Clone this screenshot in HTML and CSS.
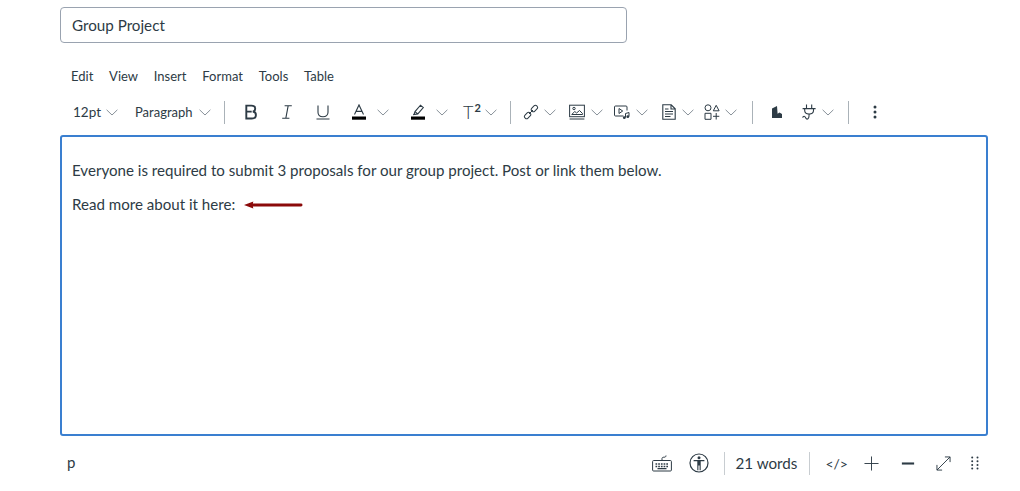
FILE: index.html
```html
<!DOCTYPE html>
<html lang="en">
<head>
<meta charset="utf-8">
<title>Group Project</title>
<link rel="stylesheet" href="styles.css">
</head>
<body>
<svg class="defs" width="0" height="0" aria-hidden="true">
  <symbol id="chev" viewBox="0 0 12 7"><path d="M.6.8 6 6 11.400.8" fill="none" stroke="#7a858d" stroke-width=".9"/></symbol>
</svg>
<main class="page">
  <div class="title-input">Group Project</div>
  <nav class="menubar">
    <span>Edit</span><span>View</span><span>Insert</span><span>Format</span><span>Tools</span><span>Table</span>
  </nav>
  <div class="toolbar">
    <div class="tool w-size"><span class="select-text">12pt</span><svg class="chev"><use href="#chev"/></svg></div>
    <div class="tool w-para"><span class="select-text para">Paragraph</span><svg class="chev"><use href="#chev"/></svg></div>
    <i class="sep s1"></i>
    <div class="tool w-b"><svg class="icon" viewBox="0 0 16 16"><path d="M3.300 1.600h5.200c2.300 0 3.700 1.200 3.700 3.100 0 1.500-.9 2.600-2.400 2.900 1.900.2 3.100 1.500 3.100 3.300 0 2.200-1.600 3.600-4.100 3.600H3.300zM3.300 7.600h5.400" fill="none" stroke="#2d3b45" stroke-width="1.900"/></svg></div>
    <div class="tool w-b"><svg class="icon" viewBox="0 0 16 16"><path d="M5.600 1.700h7.200M3.200 14.300h7.200M9.200 1.700 6.800 14.300" fill="none" stroke="#2d3b45" stroke-width="1.100"/></svg></div>
    <div class="tool w-b"><svg class="icon" viewBox="0 0 16 16"><path d="M3 1.500v6.800c0 3 2 4.500 5 4.500s5-1.500 5-4.500V1.500M1.500 15h13" fill="none" stroke="#2d3b45" stroke-width="1.100"/></svg></div>
    <div class="tool w-a"><svg class="icon" viewBox="0 0 16 16"><path d="M3.500 10.500 8 .9l4.500 9.600M5 7.400h6" fill="none" stroke="#2d3b45" stroke-width="1.100"/><rect x="1" y="12.500" width="14" height="3.200" fill="#000"/></svg><svg class="chev"><use href="#chev"/></svg></div>
    <div class="tool w-hl"><svg class="icon" viewBox="0 0 16 16"><path d="M4 10.500 5 7.600 10.500 1.200l2.800 2.300-5.500 6.400zM4 10.500h-.9M5 7.600l2.800 2.300" fill="none" stroke="#2d3b45" stroke-width="1.100"/><rect x="1" y="12.500" width="14" height="3.200" fill="#000"/></svg><svg class="chev"><use href="#chev"/></svg></div>
    <div class="tool w-sup"><span class="sup-t"><span class="sup-big">T</span><span class="sup-2">2</span></span><svg class="chev chev-tight"><use href="#chev"/></svg></div>
    <i class="sep s2"></i>
    <div class="tool w-link"><svg class="icon" viewBox="0 0 16 16"><g fill="none" stroke="#2d3b45" stroke-width="1"><rect x="9.300" y="1" width="4.200" height="7" rx="2" transform="rotate(45 11.400 4.500)"/><rect x="2.500" y="8" width="4.200" height="7" rx="2" transform="rotate(45 4.600 11.500)"/><path d="m6 10 4-4"/></g></svg><svg class="chev"><use href="#chev"/></svg></div>
    <div class="tool w-img"><svg class="icon" viewBox="0 0 16 16"><g fill="none" stroke="#2d3b45" stroke-width="1"><rect x=".6" y="1.200" width="14.800" height="11.500"/><path d="M2.700 10.500 5.800 7.500 7.600 9 10.500 6.500l3 3v1zM.6 15h14.800"/><circle cx="5" cy="4.500" r="1.200"/></g></svg><svg class="chev"><use href="#chev"/></svg></div>
    <div class="tool w-med"><svg class="icon" viewBox="0 0 16 16"><g fill="none" stroke="#2d3b45" stroke-width="1"><path d="M9.500 12H1.500a1 1 0 0 1-1-1V3a1 1 0 0 1 1-1h10.500a1 1 0 0 1 1 1v3.500"/><path d="m5 4.500 3.700 2.500L5 9.500zM11.500 13.500V9.500l3.500-1v4"/></g><circle cx="10.300" cy="13.700" r="1.400" fill="#2d3b45"/><circle cx="13.800" cy="12.700" r="1.400" fill="#2d3b45"/></svg><svg class="chev"><use href="#chev"/></svg></div>
    <div class="tool w-doc"><svg class="icon" viewBox="0 0 16 16"><g fill="none" stroke="#2d3b45" stroke-width="1.100"><path d="M1.800.8h8.400l4 4v10.400H1.800zM10 .8v4.200h4.200M4 5h3.500M4 7.500h8M4 10h8M4 12.500h5.500"/></g></svg><svg class="chev"><use href="#chev"/></svg></div>
    <div class="tool w-shp"><svg class="icon" viewBox="0 0 16 16"><g fill="none" stroke="#2d3b45" stroke-width="1"><circle cx="4" cy="3.800" r="3"/><path d="m9.300 6.800 2.900-5.500 2.900 5.500zM1 9.300h6v6H1zM12.200 9v6.500M9 12.300h6.300"/></g></svg><svg class="chev"><use href="#chev"/></svg></div>
    <i class="sep s3"></i>
    <div class="tool w-flag"><svg class="flag" viewBox="0 0 10 12"><path d="M0 12V2.400L5 0l.6 7.800 1.900-1.300L10 8v4z" fill="#2d3b45"/></svg></div>
    <div class="tool w-plug"><svg class="icon" viewBox="0 0 16 16"><g fill="none" stroke="#2d3b45" stroke-width="1.100"><path d="M5.500.6v3.800M10.700.6v3.800M1.600 4.600h13M3.700 4.600v2c0 2.300 1.900 3.500 4.400 3.500s4.400-1.200 4.400-3.500v-2M8.100 10.200c0 3.500-.7 4.900-2 4.900-1.600 0-1.400-2.900-3-2.900-.9 0-1.300.7-1.300 1.600"/></g></svg><svg class="chev"><use href="#chev"/></svg></div>
    <i class="sep s4"></i>
    <div class="tool w-more"><svg class="dots" viewBox="0 0 4 14"><circle cx="2" cy="2" r="1.500"/><circle cx="2" cy="7" r="1.500"/><circle cx="2" cy="12" r="1.500"/></svg></div>
  </div>
  <section class="editor">
    <p class="lead">Everyone is required to submit 3 proposals for our group project. Post or link them below.</p>
    <p class="read">Read more about it here:<svg class="arrow" viewBox="0 0 60 8"><path d="M0 4 9.500.4 9 2.500h49a1.500 1.500 0 0 1 0 3H9l.5 2.100z" fill="#8b0a0a"/></svg></p>
  </section>
  <footer class="status">
    <span class="path">p</span>
    <div class="status-right">
      <svg class="st-ico kbd" viewBox="0 0 20 18"><g fill="none" stroke="#2d3b45" stroke-width="1"><rect x=".6" y="6.500" width="18.800" height="10.500" rx="1"/><path d="M10 6.500V4.500c0-1 .8-1.300 2-1.300s2-.3 2-1.700"/></g><path d="M3.500 9.200h1.700v1.500H3.500zM6.200 9.200h1.700v1.500H6.200zM8.900 9.200h1.700v1.500H8.900zM11.600 9.200h1.700v1.500h-1.700zM14.300 9.200H16v1.500h-1.700zM3.500 11.700h1.700v1.500H3.500zM6.200 11.700h1.700v1.500H6.200zM8.900 11.700h1.700v1.500H8.900zM11.600 11.700h1.700v1.500h-1.700zM14.300 11.700H16v1.500h-1.700zM5.500 14h9v1.200h-9z" fill="#2d3b45"/></svg>
      <svg class="st-ico a11y" viewBox="0 0 20 20"><circle cx="10" cy="10" r="9" fill="none" stroke="#2d3b45" stroke-width="1.200"/><circle cx="10" cy="4.800" r="1.500" fill="#2d3b45"/><path d="M4.600 7h10.800v1.300h-3.700v9h-1.100v-4.800h-1.200v4.800H8.300v-9H4.600z" fill="#2d3b45"/></svg>
      <i class="st-sep sb1"></i>
      <span class="words">21 words</span>
      <i class="st-sep sb2"></i>
      <span class="code">&lt;/&gt;</span>
      <svg class="st-ico plus" viewBox="0 0 16 16"><path d="M8 .5v15M.5 8h15" fill="none" stroke="#2d3b45" stroke-width="1"/></svg>
      <svg class="st-ico minus" viewBox="0 0 16 16"><path d="M1 8h14" fill="none" stroke="#2d3b45" stroke-width="2.400"/></svg>
      <svg class="st-ico expand" viewBox="0 0 16 16"><path d="M1 15 15 1M9.500 1H15v5.500M1 9.500V15h5.500" fill="none" stroke="#2d3b45" stroke-width="1"/></svg>
      <svg class="grip" viewBox="0 0 8 14" fill="#2d3b45"><circle cx="1.200" cy="1.500" r="1"/><circle cx="6.500" cy="1.500" r="1"/><circle cx="1.200" cy="5.200" r="1"/><circle cx="6.500" cy="5.200" r="1"/><circle cx="1.200" cy="8.900" r="1"/><circle cx="6.500" cy="8.900" r="1"/><circle cx="1.200" cy="12.600" r="1"/><circle cx="6.500" cy="12.600" r="1"/></svg>
    </div>
  </footer>
</main>
</body>
</html>
```

FILE: styles.css
```css
* { box-sizing: border-box; }
html, body { margin: 0; padding: 0; background: #fff; }
body { font-family: Lato, "Open Sans", sans-serif; color: #2d3b45; width: 1020px; height: 491px; overflow: hidden; }
.defs { display: block; height: 0; }
.page { padding: 7px 32px 0 60px; }
.title-input {
  width: 567px; height: 36px; border: 1px solid #9aa3b0; border-radius: 4px;
  padding: 0 11px; font-size: 15.2px; line-height: 34px; color: #2d3b45;
}
.menubar { display: flex; height: 20px; margin-top: 23px; padding-left: 11px; font-size: 13px; line-height: 20px; gap: 15.8px; color: #2d3b45; }
.toolbar { display: flex; align-items: center; height: 30px; margin-top: 11px; }
.tool { display: flex; align-items: center; flex: none; }
.select-text { font-size: 13.5px; }
.select-text.para { font-size: 13px; }
.icon { width: 16px; height: 16px; flex: none; }
.chev { width: 12px; height: 7px; flex: none; }
.w-size { width: 75px; padding-left: 13px; gap: 5px; }
.w-para { width: 89px; gap: 6px; }
.sep { display: block; flex: none; width: 1px; height: 23px; background: #aab2b8; }
.w-b { width: 36px; }
.s1 { margin-right: 18px; }
.w-a { width: 59px; gap: 10px; }
.w-hl { width: 53px; gap: 10px; }
.w-sup { width: 47px; gap: 1px; }
.sup-t { line-height: 1; width: 21px; display: flex; font-weight: 300; }
.sup-big { font-size: 18px; }
.sup-2 { font-size: 11px; font-weight: 700; margin-left: 1px; margin-top: -1px; }
.s2 { margin-right: 12px; }
.w-link { width: 46px; gap: 5px; }
.w-img { width: 45px; gap: 6px; }
.w-med { width: 47px; gap: 6px; }
.w-doc { width: 43px; gap: 5px; }
.w-shp { width: 48px; gap: 5px; }
.s3 { margin-right: 19px; }
.flag { width: 10px; height: 12px; flex: none; }
.w-flag { width: 29px; }
.w-plug { width: 47px; gap: 5px; }
.s4 { margin-right: 24px; }
.w-more { width: 6px; }
.dots { width: 4px; height: 14px; fill: #2d3b45; }
.editor {
  width: 928px; height: 301px; margin-top: 8px; border: 2px solid #3a7fd0; border-radius: 3px;
  padding: 23px 10px 0; font-size: 15.1px; line-height: 20px; color: #2d3b45;
}
.editor p { margin: 0 0 14px; }
.read { display: flex; align-items: center; }
.arrow { width: 59px; height: 8px; margin-left: 9px; position: relative; top: 1px; }
.status { display: flex; align-items: center; justify-content: space-between; height: 30px; margin-top: 12px; font-size: 15px; }
.path { padding-left: 7px; margin-top: -3px; }
.status-right { display: flex; align-items: center; }
.st-ico { flex: none; }
.kbd { width: 20px; height: 18px; margin-right: 17px; }
.a11y { width: 20px; height: 20px; margin-right: 15px; }
.st-sep { display: block; width: 1px; height: 23px; background: #c8cdd1; flex: none; }
.words { font-size: 15.2px; margin: 0 12px 0 10px; }
.code { font-size: 14px; margin: 0 16px 0 15px; }
.plus { width: 15px; height: 15px; margin-right: 22px; }
.minus { width: 14px; height: 15px; margin-right: 21px; }
.expand { width: 15px; height: 15px; margin-right: 20px; }
.grip { width: 8px; height: 14px; margin-right: 9px; }
```
